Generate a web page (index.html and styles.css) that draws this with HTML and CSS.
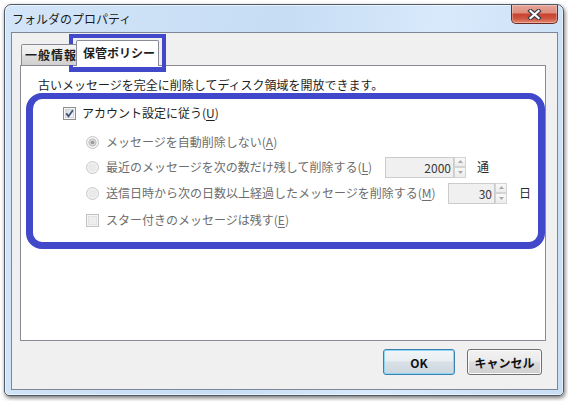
FILE: index.html
```html
<!DOCTYPE html>
<html lang="ja">
<head>
<meta charset="utf-8">
<title>フォルダのプロパティ</title>
<link rel="stylesheet" href="styles.css">
</head>
<body>
<div class="window">
  <div class="titlebar">
    <span class="title">フォルダのプロパティ</span>
    <div class="close-btn">
      <svg width="15" height="11" viewBox="0 0 15 11"><path d="M3.5 2 L11.5 9 M11.5 2 L3.5 9" stroke="#3a3f48" stroke-width="4.4" stroke-linecap="square" fill="none"/><path d="M3.5 2 L11.5 9 M11.5 2 L3.5 9" stroke="#ffffff" stroke-width="2.2" stroke-linecap="square" fill="none"/></svg>
    </div>
  </div>
  <div class="client">
    <div class="tabs">
      <div class="tab tab-general">一般情報</div>
      <div class="tab tab-active">保管ポリシー</div>
    </div>
    <div class="panel">
      <p class="desc">古いメッセージを完全に削除してディスク領域を開放できます。</p>
      <div class="row row-main">
        <svg class="ctl ctl-check" width="13" height="13" viewBox="0 0 13 13"><defs><linearGradient id="cbg" x1="0" y1="0" x2="1" y2="1"><stop offset="0" stop-color="#d6d8db"/><stop offset="1" stop-color="#fbfbfb"/></linearGradient></defs><rect x="0.5" y="0.5" width="12" height="12" fill="#f6f6f6" stroke="#8e8f8f"/><rect x="2.5" y="2.5" width="8" height="8" fill="url(#cbg)" stroke="#d2d4d6"/><path d="M3.3 6.4 L5.5 9.3 L9.9 3.2" fill="none" stroke="#3d5283" stroke-width="1.8"/></svg>
        <span class="label">アカウント設定に従う(<u>U</u>)</span>
      </div>
      <div class="options">
        <div class="row">
          <svg class="ctl ctl-radio" width="13" height="13" viewBox="0 0 13 13"><circle cx="6.5" cy="6.5" r="6" fill="#f4f4f4" stroke="#c4c4c4"/><circle cx="6.5" cy="6.5" r="3.6" fill="#d8d8d8" stroke="#b2b2b2" stroke-width="0.8"/><circle cx="6.5" cy="6.5" r="1.8" fill="#9a9a9a"/></svg>
          <span class="label label-dis">メッセージを自動削除しない(<u>A</u>)</span>
        </div>
        <div class="row row-short">
          <svg class="ctl ctl-radio" width="13" height="13" viewBox="0 0 13 13"><circle cx="6.5" cy="6.5" r="6" fill="#f1f1f1" stroke="#c8c8c8"/><circle cx="6.5" cy="6.5" r="4" fill="#e9e9e9"/></svg>
          <span class="label label-dis label-l">最近のメッセージを次の数だけ残して削除する(<u>L</u>)</span>
          <span class="spin">
            <span class="spin-box spin-wide">2000</span>
            <span class="spin-arrows"><span class="spin-up"><svg width="5" height="3" viewBox="0 0 5 3"><path d="M0 3 L2.5 0 L5 3Z" fill="#a9a9a9"/></svg></span><span class="spin-down"><svg width="5" height="3" viewBox="0 0 5 3"><path d="M0 0 L2.5 3 L5 0Z" fill="#a9a9a9"/></svg></span></span>
          </span>
          <span class="unit">通</span>
        </div>
        <div class="row row-tall">
          <svg class="ctl ctl-radio" width="13" height="13" viewBox="0 0 13 13"><circle cx="6.5" cy="6.5" r="6" fill="#f1f1f1" stroke="#c8c8c8"/><circle cx="6.5" cy="6.5" r="4" fill="#e9e9e9"/></svg>
          <span class="label label-dis label-m">送信日時から次の日数以上経過したメッセージを削除する(<u>M</u>)</span>
          <span class="spin">
            <span class="spin-box spin-narrow">30</span>
            <span class="spin-arrows"><span class="spin-up"><svg width="5" height="3" viewBox="0 0 5 3"><path d="M0 3 L2.5 0 L5 3Z" fill="#a9a9a9"/></svg></span><span class="spin-down"><svg width="5" height="3" viewBox="0 0 5 3"><path d="M0 0 L2.5 3 L5 0Z" fill="#a9a9a9"/></svg></span></span>
          </span>
          <span class="unit unit-day">日</span>
        </div>
        <div class="row">
          <svg class="ctl ctl-check" width="13" height="13" viewBox="0 0 13 13"><rect x="0.5" y="0.5" width="12" height="12" fill="#f4f4f4" stroke="#c2c2c2"/><rect x="2.5" y="2.5" width="8" height="8" fill="#eeeeee" stroke="#e2e2e2"/></svg>
          <span class="label label-dis">スター付きのメッセージは残す(<u>E</u>)</span>
        </div>
      </div>
    </div>
    <div class="buttons">
      <button class="btn btn-ok">OK</button>
      <button class="btn btn-cancel">キャンセル</button>
    </div>
  </div>
</div>
<div class="mark mark-tab"></div>
<div class="mark mark-group"></div>
</body>
</html>
```
FILE: styles.css
```css
* { box-sizing: border-box; }
html, body { margin: 0; padding: 0; }
body {
  width: 568px;
  height: 401px;
  overflow: hidden;
  position: relative;
  background: #ffffff;
  font-family: "Noto Sans CJK JP", "Noto Sans", sans-serif;
  font-size: 12px;
  color: #1e1e1e;
}
.window {
  margin: 4px 0 0 4px;
  width: 560px;
  height: 392px;
  border: 1px solid #515a66;
  border-radius: 7px 7px 5px 5px;
  background: linear-gradient(100deg, #d3e5f8 0%, #c6ddf4 45%, #d8e9fb 70%, #c8def5 100%);
  box-shadow: 1px 2px 4px rgba(0,0,0,0.55), inset 0 0 0 1px rgba(255,255,255,0.55);
  padding: 0 5px 5px 6px;
  display: flex;
  flex-direction: column;
}
.titlebar {
  height: 27px;
  flex: none;
  display: flex;
  justify-content: space-between;
}
.title {
  align-self: center;
  padding-left: 1px;
  padding-top: 1px;
  line-height: 16px;
  color: #1b1b1b;
}
.close-btn {
  width: 47px;
  height: 19px;
  border: 1px solid #6c2b24;
  border-top: none;
  border-radius: 0 0 5px 5px;
  background: linear-gradient(#e7a597 0%, #de8f7e 42%, #c8432f 52%, #cf5540 75%, #e48b74 100%);
  box-shadow: inset 0 0 0 1px rgba(255,255,255,0.3);
  display: flex;
  align-items: center;
  justify-content: center;
}
.client {
  height: 358px;
  flex: none;
  border: 1px solid #7c8696;
  background: #f0f0f0;
  padding: 7px 11px 0 8px;
  display: flex;
  flex-direction: column;
}
.tabs {
  height: 25px;
  flex: none;
  display: flex;
  align-items: flex-end;
  padding-left: 1px;
  position: relative;
  z-index: 1;
}
.tab {
  height: 21px;
  width: 57px;
  padding: 0 4px;
  border: 1px solid #898c95;
  border-bottom: none;
  border-radius: 2px 2px 0 0;
  background: linear-gradient(#f3f3f3, #ebebeb 50%, #dedede 50%, #d0d0d0);
  font-weight: 700;
  line-height: 19px;
  white-space: nowrap;
  overflow: hidden;
  color: #1e1e1e;
}
.tab-general {
  padding-left: 3px;
  letter-spacing: 1px;
}
.tab-active {
  height: 26px;
  width: 83px;
  margin-left: -2px;
  margin-bottom: -1px;
  padding: 0 6px;
  background: #ffffff;
  line-height: 23px;
}
.panel {
  height: 276px;
  flex: none;
  border: 1px solid #898c95;
  background: #ffffff;
  padding: 10px 0 0 17px;
}
.desc {
  margin: 0;
  height: 18px;
  line-height: 18px;
  white-space: nowrap;
}
.row {
  display: flex;
  align-items: center;
  height: 26px;
  white-space: nowrap;
}
.row-short { height: 24px; }
.row-tall { height: 28px; }
.row-main {
  margin-top: 6px;
  padding-left: 25px;
}
.row-main .ctl { margin-right: 6px; }
.options {
  margin-top: 3px;
  padding-left: 48px;
}
.ctl { flex: none; display: block; }
.ctl-radio, .options .ctl-check { margin-right: 7px; }
.label { line-height: 16px; }
.label u { text-underline-offset: 2px; }
.label-dis { color: #6d6d6d; }
.label-l { width: 279px; }
.label-m { width: 342px; }
.spin {
  display: flex;
  height: 21px;
}
.spin-box {
  height: 21px;
  border: 1px solid #c9cbce;
  background: #f0f0f0;
  text-align: right;
  padding-right: 2px;
  line-height: 19px;
  color: #3a3a3a;
}
.spin-wide { width: 69px; }
.spin-narrow { width: 47px; }
.spin-arrows {
  width: 12px;
  height: 21px;
  display: flex;
  flex-direction: column;
}
.spin-arrows > span {
  flex: 1;
  border: 1px solid #d4d4d4;
  background: linear-gradient(#f8f8f8, #ececec);
  display: flex;
  align-items: center;
  justify-content: center;
}
.spin-arrows svg { display: block; }
.unit {
  margin-left: 11px;
  line-height: 16px;
  color: #2a2a2a;
}
.unit-day { margin-left: 12px; }
.buttons {
  display: flex;
  justify-content: flex-end;
  gap: 12px;
  margin-top: 8px;
  padding-right: 4px;
}
.btn {
  height: 26px;
  padding: 0;
  font-family: inherit;
  font-size: 12px;
  font-weight: 700;
  color: #111;
  border: 1px solid #707070;
  border-radius: 3px;
  background: linear-gradient(#f2f2f2, #ebebeb 45%, #dddddd 50%, #cfcfcf);
  box-shadow: inset 0 0 0 1px #fbfbfb;
}
.btn-ok {
  width: 72px;
  border-color: #3c7fb1;
  box-shadow: inset 0 0 0 1px #8fd6f5;
  background: linear-gradient(#f1f5f8, #e8eef2 45%, #d8e1e7 50%, #ccd6dd);
}
.btn-cancel { width: 75px; }
.mark {
  position: absolute;
  border-style: solid;
  border-color: #4148c9;
}
.mark-tab {
  left: 69px;
  top: 34px;
  width: 97px;
  height: 38px;
  border-width: 4px 4px 5px 4px;
}
.mark-group {
  left: 26px;
  top: 93px;
  width: 519px;
  height: 156px;
  border-width: 6px 7px 7px 7px;
  border-radius: 16px;
}
```
